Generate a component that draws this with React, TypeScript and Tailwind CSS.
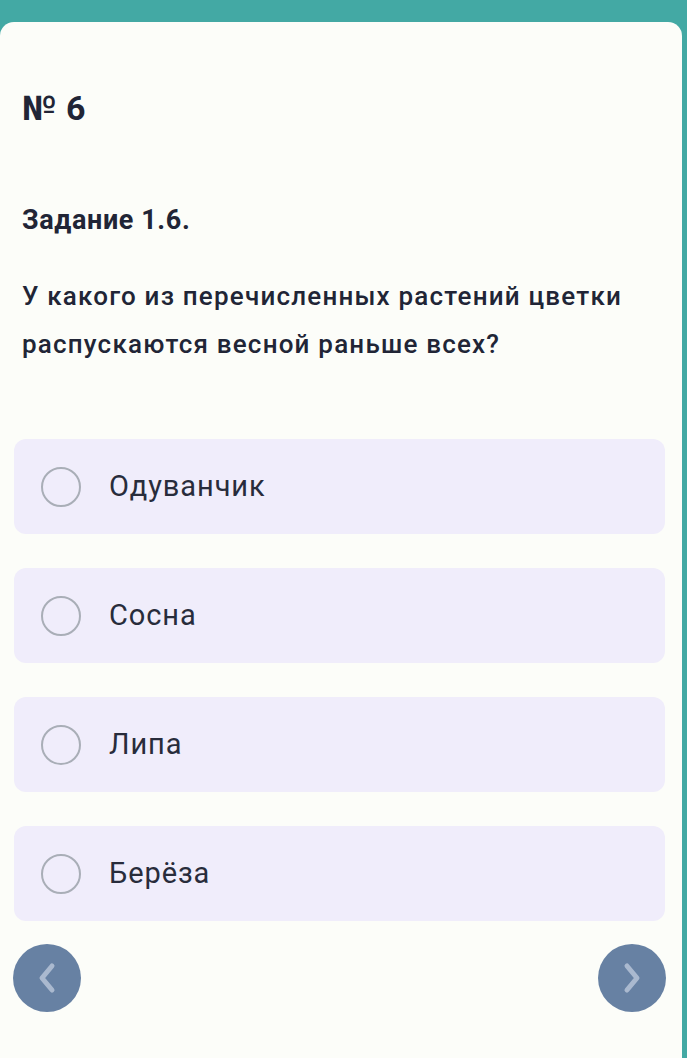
const options = ['Одуванчик', 'Сосна', 'Липа', 'Берёза'];

function Chevron({ dir }: { dir: 'left' | 'right' }) {
  return (
    <svg width="20" height="32" viewBox="0 0 20 32" fill="none" stroke="#aab9cf" strokeWidth={5} strokeLinecap="round" strokeLinejoin="round">
      {dir === 'left' ? <polyline points="15,4 5,16 15,28" /> : <polyline points="5,4 15,16 5,28" />}
    </svg>
  );
}

export default function App() {
  return (
    <div className="min-h-[1058px] bg-[#43a9a4] pt-[22px] pr-[5px]" style={{ fontFamily: 'Roboto, "Noto Sans", sans-serif' }}>
      <div className="min-h-[1036px] rounded-t-[14px] bg-[#fcfdf9] px-[22px] pt-[68px] text-[#212536]">
        <h1 className="text-[34px] font-bold leading-[36px] tracking-[0.5px]">№ 6</h1>

        <h2 className="mt-[78px] text-[27px] font-bold leading-[32px] tracking-[0.6px]">Задание 1.6.</h2>

        <p className="mt-[36px] text-[26px] font-medium leading-[48px] tracking-[1.2px]">
          У какого из перечисленных растений цветки распускаются весной раньше всех?
        </p>

        {/* Answers */}
        <div className="mt-[71px] -ml-2 -mr-[5px] flex flex-col gap-[34px]">
          {options.map(o => (
            <label key={o} className="flex h-[95px] items-center rounded-xl bg-[#f0edfb] pl-[27px]">
              <span className="h-[40px] w-[40px] shrink-0 rounded-full border-2 border-[#a9aeb7]" />
              <span className="ml-[28px] text-[29px] tracking-[0.9px] text-[#282c3b]">{o}</span>
            </label>
          ))}
        </div>

        {/* Navigation */}
        <div className="mt-[23px] -ml-[9px] -mr-[6px] flex justify-between">
          <button className="flex h-[68px] w-[68px] items-center justify-center rounded-full bg-[#6781a3]">
            <Chevron dir="left" />
          </button>
          <button className="flex h-[68px] w-[68px] items-center justify-center rounded-full bg-[#6781a3]">
            <Chevron dir="right" />
          </button>
        </div>
      </div>
    </div>
  );
}
